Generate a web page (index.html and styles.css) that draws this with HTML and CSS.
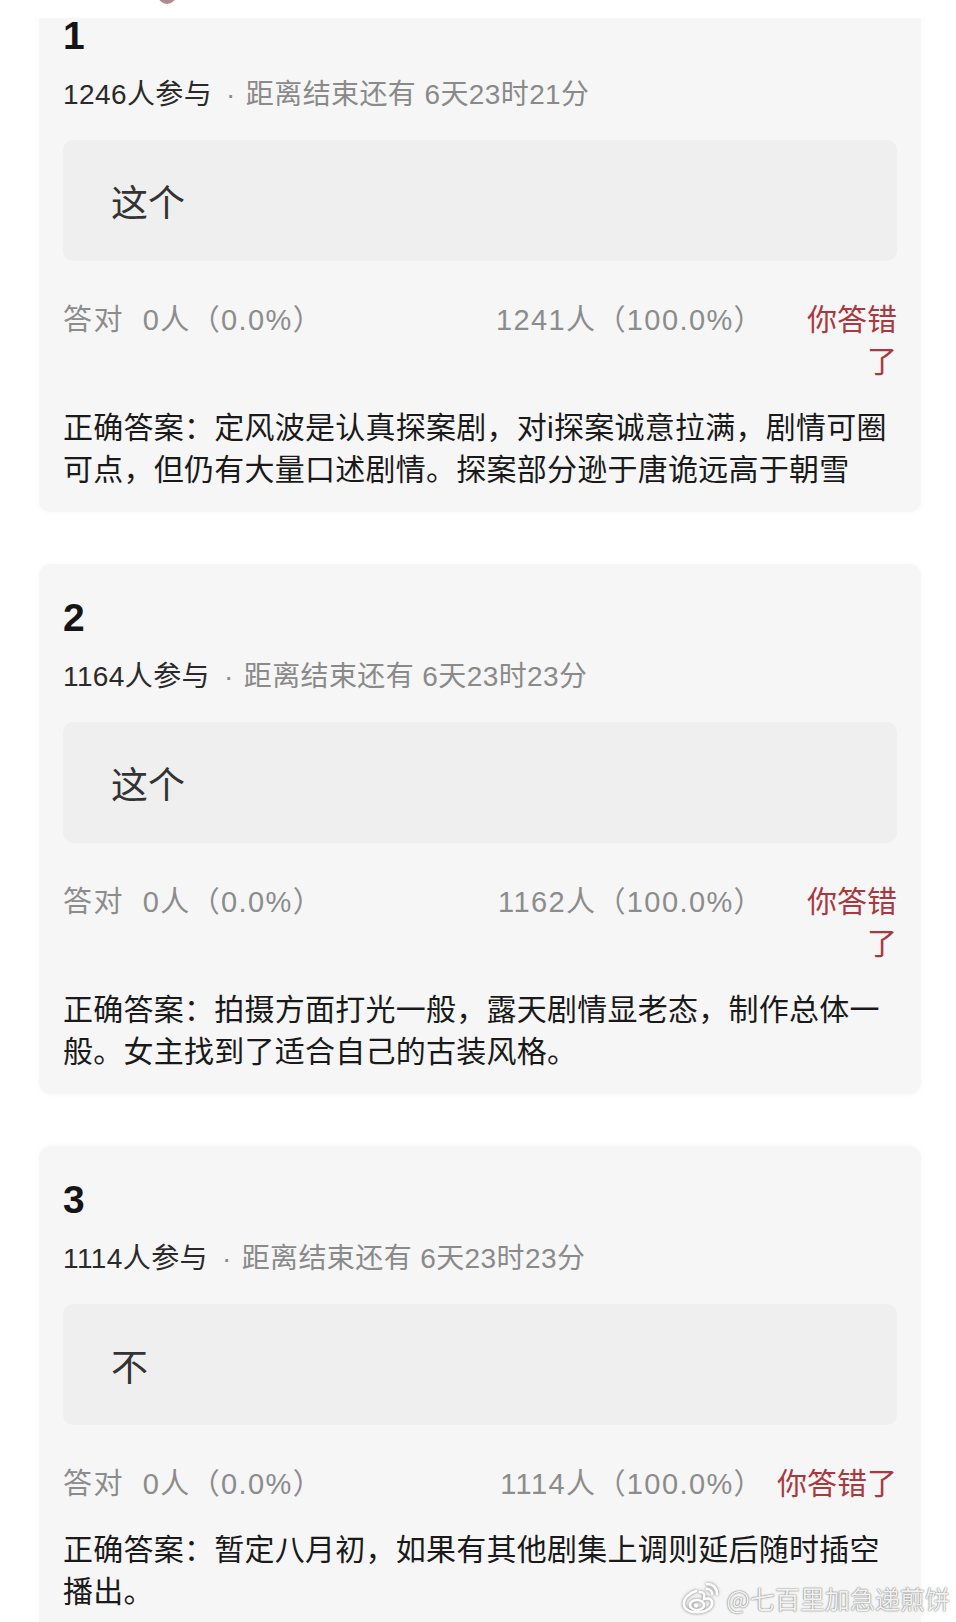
FILE: index.html
```html
<!DOCTYPE html>
<html lang="zh-CN">
<head>
    <meta charset="UTF-8">
    <meta name="viewport" content="width=device-width, initial-scale=1.0">
    <title>竞猜结果</title>
    <link rel="stylesheet" href="styles.css">
</head>
<body>
    <!-- top bar (page is scrolled, first card slides under it) -->
    <div class="topbar"><span class="avatar"></span></div>

    <div class="feed">
        <!-- Question 1 -->
        <div class="card">
            <div class="q-num">1</div>
            <div class="q-meta"><span class="joined">1246人参与</span><span class="dot">·</span>距离结束还有 6天23时21分</div>
            <div class="option">这个</div>
            <div class="stats">
                <span class="stat">答对&nbsp;&nbsp;0人（0.0%）</span>
                <span class="stat stat-wrong">1241人（100.0%）</span>
                <span class="verdict narrow">你答错了</span>
            </div>
            <p class="answer">正确答案：定风波是认真探案剧，对i探案诚意拉满，剧情可圈可点，但仍有大量口述剧情。探案部分逊于唐诡远高于朝雪</p>
        </div>

        <!-- Question 2 -->
        <div class="card">
            <div class="q-num">2</div>
            <div class="q-meta"><span class="joined">1164人参与</span><span class="dot">·</span>距离结束还有 6天23时23分</div>
            <div class="option">这个</div>
            <div class="stats">
                <span class="stat">答对&nbsp;&nbsp;0人（0.0%）</span>
                <span class="stat stat-wrong">1162人（100.0%）</span>
                <span class="verdict narrow">你答错了</span>
            </div>
            <p class="answer">正确答案：拍摄方面打光一般，露天剧情显老态，制作总体一般。女主找到了适合自己的古装风格。</p>
        </div>

        <!-- Question 3 -->
        <div class="card">
            <div class="q-num">3</div>
            <div class="q-meta"><span class="joined">1114人参与</span><span class="dot">·</span>距离结束还有 6天23时23分</div>
            <div class="option">不</div>
            <div class="stats">
                <span class="stat">答对&nbsp;&nbsp;0人（0.0%）</span>
                <span class="stat stat-wrong">1114人（100.0%）</span>
                <span class="verdict">你答错了</span>
            </div>
            <p class="answer">正确答案：暂定八月初，如果有其他剧集上调则延后随时插空播出。</p>
        </div>
    </div>

    <!-- weibo watermark -->
    <div class="watermark">
        <svg class="wb-logo" width="40" height="34" viewBox="0 0 40 34">
            <g fill="none" stroke="#fff" stroke-width="2.6" stroke-linecap="round">
                <path d="M16 10 C9 12 3 18 4 24 C5 30 13 32 20 31 C28 30 33 26 32 21 C31 17 27 17 24 18 C25 14 24 11 20 11"/>
                <ellipse cx="17" cy="24" rx="7" ry="5"/>
                <path d="M27 8 C30 8 32 10 32 13"/>
                <path d="M27 3 C33 3 37 7 37 13"/>
            </g>
            <circle cx="16" cy="24.5" r="2.2" fill="#fff"/>
        </svg>
        <span>@七百里加急递煎饼</span>
    </div>
</body>
</html>
```

FILE: styles.css
```css
body {
    margin: 0;
    background: #fff;
    font-family: "Liberation Sans", "Noto Sans CJK SC", sans-serif;
    color: #1a1a1a;
    width: 956px;
    height: 1622px;
    overflow: hidden;
    position: relative;
}
.topbar {
    position: absolute;
    top: 0;
    left: 0;
    right: 0;
    height: 18px;
    background: #fff;
    z-index: 2;
    overflow: hidden;
}
.avatar {
    position: absolute;
    left: 158px;
    top: -14px;
    width: 18px;
    height: 18px;
    border-radius: 50%;
    background: #8a5a62;
    opacity: 0.7;
}
.feed {
    margin-top: -18px;
    padding: 0 35px 0 39px;
    display: flex;
    flex-direction: column;
    gap: 52px;
}
.card {
    background: #f6f6f6;
    border-radius: 12px;
    padding: 34px 24px 21px;
    box-shadow: 0 0 6px rgba(0, 0, 0, 0.035);
}
.q-num {
    font-size: 39px;
    line-height: 39px;
    font-weight: bold;
    color: #151515;
}
.q-meta {
    margin-top: 20px;
    font-size: 28px;
    line-height: 40px;
    letter-spacing: 0.4px;
    color: #8a8a8a;
}
.q-meta .joined {
    color: #2a2a2a;
}
.q-meta .dot {
    margin: 0 10px 0 14px;
}
.option {
    margin-top: 25px;
    height: 121px;
    background: #efefef;
    border-radius: 10px;
    padding-left: 48px;
    display: flex;
    align-items: center;
    font-size: 37px;
    color: #333;
}
.stats {
    margin-top: 38px;
    display: flex;
    align-items: flex-start;
    font-size: 29px;
    line-height: 42px;
    letter-spacing: 1.4px;
    color: #8c8c8c;
}
.stat-wrong {
    flex: 1;
    text-align: right;
}
.verdict {
    margin-left: 13px;
    font-size: 30px;
    letter-spacing: 0;
    color: #a8393f;
    text-align: right;
}
.verdict.narrow {
    width: 92px;
    margin-left: 41px;
}
.answer {
    margin: 24px 0 0;
    font-size: 30px;
    line-height: 42px;
    letter-spacing: 0.25px;
    color: #1a1a1a;
}
.watermark {
    position: absolute;
    right: 6px;
    bottom: 6px;
    display: flex;
    align-items: center;
    gap: 6px;
    font-family: "Noto Sans CJK SC", sans-serif;
    font-size: 25px;
    color: rgba(255, 255, 255, 0.92);
    text-shadow: 0 0 2px rgba(0, 0, 0, 0.45), 0 0 1px rgba(0, 0, 0, 0.4);
}
.wb-logo {
    filter: drop-shadow(0 0 1.5px rgba(0, 0, 0, 0.5));
}
```
